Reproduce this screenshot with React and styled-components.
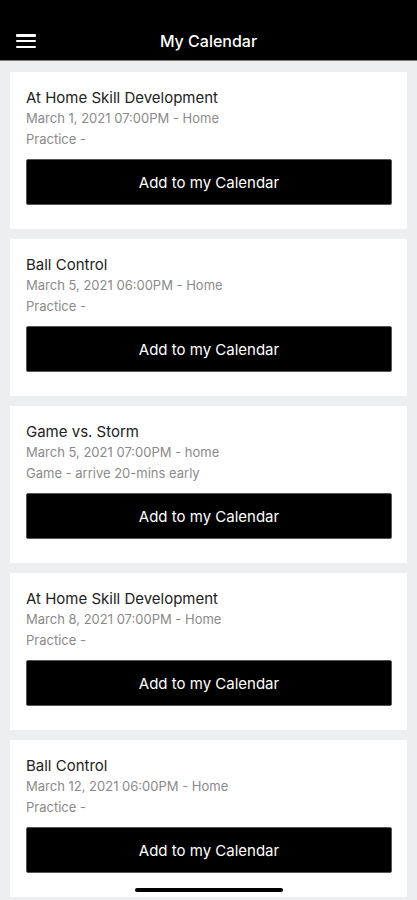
import React from 'react'
import styled, { createGlobalStyle } from 'styled-components'

const GlobalStyle = createGlobalStyle`
  html, body {
    margin: 0;
    padding: 0;
    background: #edeeef;
    font-family: Inter, "Liberation Sans", Arial, sans-serif;
  }
`

const Page = styled.div`
  width: 417px;
  min-height: 900px;
  background: #edeeef;
`

const Header = styled.header`
  height: 61px;
  background: #000;
  display: flex;
  align-items: flex-end;
  justify-content: center;
  position: relative;
  border-bottom: 1px solid #7d7d7d;
  box-sizing: border-box;
`

const HeaderTitle = styled.h1`
  margin: 0 0 9px;
  color: #fff;
  font-size: 16px;
  font-weight: 500;
  line-height: 20px;
`

const Menu = styled.button`
  position: absolute;
  left: 16px;
  top: 34px;
  width: 20px;
  height: 14px;
  padding: 0;
  border: 0;
  background: none;
  display: flex;
  flex-direction: column;
  justify-content: space-between;
`

const Bar = styled.span`
  display: block;
  height: 2.5px;
  background: #fff;
  border-radius: 1px;
`

const List = styled.main`
  display: flex;
  flex-direction: column;
  gap: 10px;
  padding: 11px 10px 0;
`

const Card = styled.section`
  background: #fff;
  padding: 16px 15px 24px 16px;
`

const Title = styled.div`
  font-size: 15px;
  color: #222;
  line-height: 20px;
`

const Meta = styled.div`
  font-size: 13px;
  color: #8a8a8a;
  line-height: 21px;
`

const AddButton = styled.button`
  display: block;
  width: 100%;
  height: 46px;
  margin-top: 9px;
  border: 1px solid #555;
  border-radius: 2px;
  background: #000;
  color: #fff;
  font-family: inherit;
  font-size: 15px;
`

const HomeIndicator = styled.div`
  position: fixed;
  left: 135px;
  top: 888px;
  width: 148px;
  height: 4px;
  border-radius: 2px;
  background: #000;
`

const events = [
  { title: 'At Home Skill Development', when: 'March 1, 2021 07:00PM - Home', note: 'Practice -' },
  { title: 'Ball Control', when: 'March 5, 2021 06:00PM - Home', note: 'Practice -' },
  { title: 'Game vs. Storm', when: 'March 5, 2021 07:00PM - home', note: 'Game - arrive 20-mins early' },
  { title: 'At Home Skill Development', when: 'March 8, 2021 07:00PM - Home', note: 'Practice -' },
  { title: 'Ball Control', when: 'March 12, 2021 06:00PM - Home', note: 'Practice -' },
]

export default function App() {
  return (
    <Page>
      <GlobalStyle />
      <Header>
        <Menu aria-label="menu">
          <Bar />
          <Bar />
          <Bar />
        </Menu>
        <HeaderTitle>My Calendar</HeaderTitle>
      </Header>
      <List>
        {events.map((e, i) => (
          <Card key={i}>
            <Title>{e.title}</Title>
            <Meta>{e.when}</Meta>
            <Meta>{e.note}</Meta>
            <AddButton>Add to my Calendar</AddButton>
          </Card>
        ))}
      </List>
      <HomeIndicator />
    </Page>
  )
}
